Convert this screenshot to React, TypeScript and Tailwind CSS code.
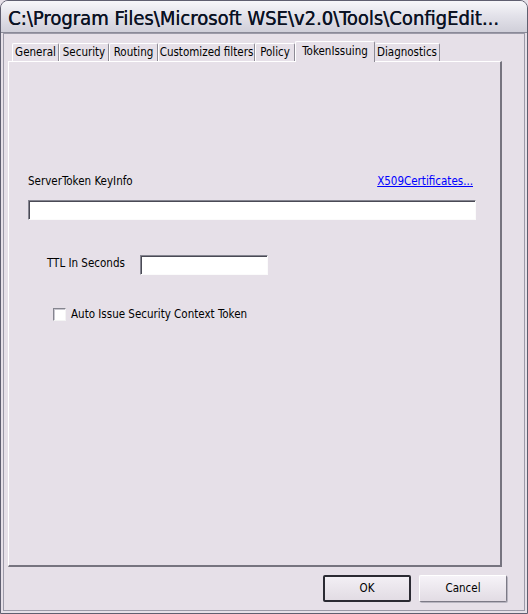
const tabs = [
  { label: "General", w: "w-[47px]" },
  { label: "Security", w: "w-[50px]" },
  { label: "Routing", w: "w-[49px]" },
  { label: "Customized filters", w: "w-[97px]" },
  { label: "Policy", w: "w-[40px]" },
];

const inputCls =
  "h-[20px] bg-white border border-t-[#858590] border-l-[#858590] border-b-[#fbfbfb] border-r-[#fbfbfb] shadow-[inset_1px_1px_0_#4a4a55]";

export default function App() {
  return (
    <div className="w-[528px] h-[614px] bg-[#e6e0e8] font-['DejaVu_Sans_Condensed','Liberation_Sans',sans-serif] text-[11.5px] leading-[13px] text-black">
      <div className="w-full h-full flex flex-col rounded-t-[8px] border border-[#5f5f70] overflow-hidden">
        {/* title bar */}
        <div className="h-[32px] shrink-0 flex items-center pl-[7px] pt-[2px] bg-gradient-to-b from-[#f7f7fa] via-[#e2e1e9] to-[#d0cfd9] border-b border-[#8a8a98]">
          <span className="font-['DejaVu_Sans_Condensed','DejaVu_Sans',sans-serif] text-[20px] leading-[24px] text-[#0b1224] whitespace-nowrap [text-shadow:0.4px_0_0_#0b1224]">
            C:\Program Files\Microsoft WSE\v2.0\Tools\ConfigEdit...
          </span>
        </div>

        {/* body */}
        <div className="flex-1 flex flex-col border-x-2 border-b-2 border-x-[#e6e0e8] border-b-[#e6e0e8] shadow-[inset_0_0_0_1px_#9c9aa8]">
          <div className="flex-1 flex flex-col px-[5px] pt-[7px]">
            {/* tabs */}
            <div className="flex items-end h-[21px] pl-[4px]">
              {tabs.map((t) => (
                <div
                  key={t.label}
                  className={`${t.w} h-[18px] flex items-center justify-center border-t border-l border-t-white border-l-white border-r border-r-[#8d8b95] rounded-t-[2px] whitespace-nowrap`}
                >
                  {t.label}
                </div>
              ))}
              <div className="w-[80px] h-[21px] -mb-px relative z-10 bg-[#e6e0e8] flex items-start pt-[3px] justify-center border-t border-l border-t-white border-l-white border-r border-r-[#8d8b95] rounded-t-[2px] whitespace-nowrap">
                TokenIssuing
              </div>
              <div className="w-[65px] h-[18px] flex items-center justify-center border-t border-r border-t-white border-r-[#8d8b95] rounded-t-[2px] whitespace-nowrap">
                Diagnostics
              </div>
            </div>

            {/* panel */}
            <div className="w-[494px] h-[506px] border-t border-l border-t-white border-l-white border-r-2 border-b-2 border-r-[#76747f] border-b-[#76747f] flex flex-col">
              <div className="mt-[113px] ml-[19px] mr-[27px] flex justify-between">
                <span>ServerToken KeyInfo</span>
                <span className="text-[#0000ff] underline cursor-pointer">X509Certificates...</span>
              </div>
              <div className={`${inputCls} mt-[12px] ml-[19px] w-[448px]`} />

              <div className="mt-[35px] ml-[38px] flex items-center">
                <span className="w-[93px] -mt-[4px]">TTL In Seconds</span>
                <div className={`${inputCls} w-[128px]`} />
              </div>

              <div className="mt-[33px] ml-[44px] flex items-center gap-[5px]">
                <div className="w-[13px] h-[13px] bg-white border border-t-[#85858f] border-l-[#85858f] border-b-[#f4f4f4] border-r-[#f4f4f4] shadow-[inset_1px_1px_0_#c8c6cf]" />
                <span>Auto Issue Security Context Token</span>
              </div>
            </div>

            {/* buttons */}
            <div className="flex justify-end gap-[8px] mt-[8px] pr-[13px]">
              <button className="w-[88px] h-[27px] bg-gradient-to-b from-[#f2eff4] to-[#e2dce4] border-2 border-[#2a2a32] rounded-[2px]">
                OK
              </button>
              <button className="w-[88px] h-[27px] bg-gradient-to-b from-[#f6f3f8] to-[#e2dce4] border border-t-white border-l-white border-r-[#7c7a86] border-b-[#7c7a86] shadow-[1px_1px_0_#b8b5c0] rounded-[2px]">
                Cancel
              </button>
            </div>
          </div>
        </div>
      </div>
    </div>
  );
}
